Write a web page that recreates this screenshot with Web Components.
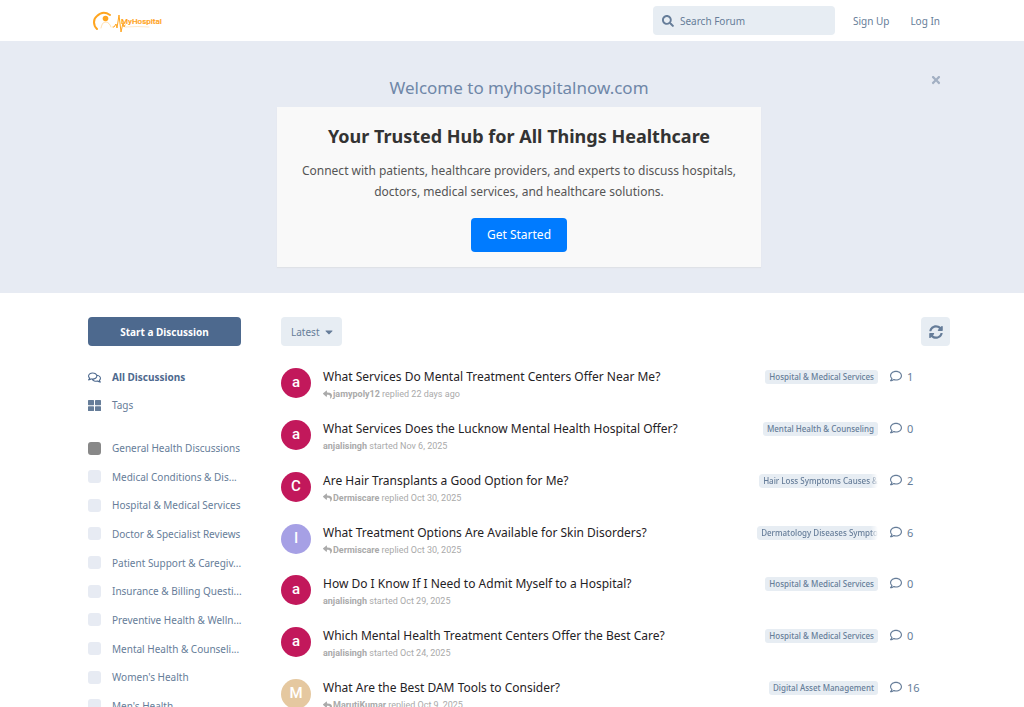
<!DOCTYPE html>
<html lang="en">
<head>
<meta charset="utf-8">
<meta name="viewport" content="width=device-width, initial-scale=1">
<title>MyHospital Forum</title>
<style>
:root { --primary: #4d698e; --muted: #667d99; --control: #e7edf3; --hero: #e7ebf3; --gutter-l: 88px; --gutter-r: 74px; }
body { margin: 0; background: #fff; color: var(--muted); font-family: "Noto Sans", "Open Sans", sans-serif; font-size: 10px; line-height: 16px; }
</style>
</head>
<body>
<forum-app></forum-app>
<script>
const icons = {
  search: ['0 0 512 512', 'M505 442.700 405.300 343c-4.500-4.500-10.600-7-17-7H372c27.600-35.300 44-79.700 44-128C416 93.100 322.900 0 208 0S0 93.100 0 208s93.100 208 208 208c48.300 0 92.700-16.400 128-44v16.300c0 6.400 2.500 12.500 7 17l99.700 99.700c9.400 9.400 24.600 9.400 33.900 0l28.300-28.300c9.400-9.400 9.400-24.600.1-34zM208 336c-70.700 0-128-57.200-128-128 0-70.700 57.200-128 128-128 70.700 0 128 57.200 128 128 0 70.700-57.200 128-128 128z'],
  close: ['0 0 352 512', 'M242.720 256l100.070-100.070c12.280-12.280 12.280-32.190 0-44.480l-22.240-22.240c-12.280-12.280-32.190-12.280-44.480 0L176 189.280 75.930 89.210c-12.280-12.280-32.190-12.280-44.480 0L9.210 111.450c-12.280 12.280-12.280 32.190 0 44.480L109.280 256 9.210 356.070c-12.280 12.280-12.280 32.190 0 44.480l22.240 22.240c12.280 12.280 32.200 12.280 44.480 0L176 322.720l100.070 100.070c12.280 12.280 32.200 12.280 44.480 0l22.240-22.240c12.280-12.280 12.280-32.190 0-44.480L242.720 256z'],
  caret: ['0 0 320 512', 'M31.300 192h257.300c17.800 0 26.700 21.500 14.100 34.100L174.100 354.800c-7.800 7.800-20.500 7.800-28.300 0L17.200 226.100C4.600 213.500 13.500 192 31.300 192z'],
  sync: ['0 0 512 512', 'M370.720 133.280C339.458 104.008 298.888 87.962 255.848 88c-77.458.068-144.328 53.178-162.791 126.850-1.344 5.363-6.122 9.150-11.651 9.150H24.103c-7.498 0-13.194-6.807-11.807-14.176C33.933 94.924 134.813 8 256 8c66.448 0 126.791 26.136 171.315 68.685L463.030 40.970C478.149 25.851 504 36.559 504 57.941V192c0 13.255-10.745 24-24 24H345.941c-21.382 0-32.090-25.851-16.971-40.971l41.750-41.749zM32 296h134.059c21.382 0 32.090 25.851 16.971 40.971l-41.750 41.750c31.262 29.273 71.835 45.319 114.876 45.280 77.418-.07 144.315-53.144 162.787-126.849 1.344-5.363 6.122-9.150 11.651-9.150h57.304c7.498 0 13.194 6.807 11.807 14.176C478.067 417.076 377.187 504 256 504c-66.448 0-126.791-26.136-171.315-68.685L48.970 471.030C33.851 486.149 8 475.441 8 454.059V320c0-13.255 10.745-24 24-24z'],
  reply: ['0 0 512 512', 'M8.309 189.836L184.313 37.851C199.719 24.546 224 35.347 224 56.015v80.053c160.629 1.839 288 34.032 288 186.258 0 61.441-39.581 122.309-83.333 154.132-13.653 9.931-33.111-2.533-28.077-18.631 45.344-145.012-21.507-183.510-176.590-185.742V360c0 20.700-24.300 31.453-39.687 18.164l-176.004-152c-11.071-9.562-11.086-26.753 0-36.328z'],
  comment: ['0 0 512 512', 'M256 32C114.600 32 0 125.100 0 240c0 47.600 19.900 91.200 52.900 126.300C38 405.700 7 439.100 6.500 439.500c-6.600 7-8.400 17.200-4.600 26S14.400 480 24 480c61.500 0 110-25.700 139.100-46.300C192 442.800 223.200 448 256 448c141.400 0 256-93.100 256-208S397.400 32 256 32zm0 368c-26.700 0-53.100-4.100-78.400-12.100l-22.700-7.200-19.500 13.800c-14.300 10.100-33.900 21.400-57.500 29 7.300-12.100 14.400-25.700 19.900-40.200l10.600-28.100-20.600-21.800C69.700 314.100 48 282.200 48 240c0-88.200 93.300-160 208-160s208 71.800 208 160-93.300 160-208 160z'],
  comments: ['0 0 576 512', 'M532 386.200c27.500-27.100 44-61.100 44-98.200 0-80-76.500-146.100-176.200-157.900C368.300 72.500 294.300 32 208 32 93.100 32 0 103.600 0 192c0 37 16.500 71 44 98.200-15.300 30.700-37.300 54.500-37.700 54.900-6.300 6.700-8.100 16.500-4.400 25 3.600 8.500 12 14 21.200 14 53.500 0 96.700-20.200 125.200-38.800 9.200 2.100 18.700 3.700 28.400 4.900C208.100 407.600 281.800 448 368 448c20.800 0 40.800-2.400 59.800-6.800C456.300 459.700 499.400 480 553 480c9.200 0 17.500-5.500 21.200-14 3.600-8.500 1.900-18.300-4.400-25-.4-.3-22.500-24.100-37.800-54.800zm-392.800-92.300L122.100 305c-14.100 9.100-28.500 16.300-43.100 21.400 2.700-4.700 5.400-9.700 8-14.800l15.500-31.100L77.700 256C64.200 242.600 48 220.700 48 192c0-60.700 73.300-112 160-112s160 51.300 160 112-73.300 112-160 112c-16.500 0-33-1.900-49-5.600l-19.800-4.500zM498.300 352l-24.700 24.400 15.500 31.100c2.600 5.100 5.300 10.100 8 14.800-14.600-5.100-29-12.300-43.100-21.400l-17.100-11.100-19.900 4.600c-16 3.700-32.500 5.600-49 5.600-54 0-102.200-20.100-131.300-49.700C338 339.500 416 272.900 416 192c0-3.400-.4-6.700-.7-10C479.700 196.500 528 238.800 528 288c0 28.700-16.200 50.600-29.700 64z'],
  grid: ['0 0 512 512', 'M24 40h188a24 24 0 0 1 24 24v156a24 24 0 0 1-24 24H24a24 24 0 0 1-24-24V64a24 24 0 0 1 24-24zM300 40h188a24 24 0 0 1 24 24v156a24 24 0 0 1-24 24H300a24 24 0 0 1-24-24V64a24 24 0 0 1 24-24zM24 284h188a24 24 0 0 1 24 24v140a24 24 0 0 1-24 24H24a24 24 0 0 1-24-24V308a24 24 0 0 1 24-24zM300 284h188a24 24 0 0 1 24 24v140a24 24 0 0 1-24 24H300a24 24 0 0 1-24-24V308a24 24 0 0 1 24-24z']
};

class Base extends HTMLElement {
  connectedCallback() {
    if (this.shadowRoot) return;
    this.attachShadow({ mode: 'open' }).innerHTML = `<style>*{box-sizing:border-box}a{color:inherit;text-decoration:none}button{font:inherit;border:0;margin:0;cursor:pointer}</style>` + this.render();
  }
}
const define = (name, render) => customElements.define(name, class extends Base { render() { return render(this); } });

define('fa-icon', el => {
  const [box, d] = icons[el.getAttribute('name')];
  return `<style>:host{display:inline-flex;flex:none;width:12px;height:12px}svg{width:100%;height:100%;fill:currentColor}</style><svg viewBox="${box}" aria-hidden="true"><path d="${d}"/></svg>`;
});

define('site-logo', () => `
<style>:host{display:block}a{display:block}svg{display:block;width:70px;height:22px}
text{font:500 8px Roboto,sans-serif;fill:#ffa51f;stroke:#ffa51f;stroke-width:.2px}</style>
<a href="#" aria-label="MyHospital"><svg viewBox="0 0 70 22">
<g fill="none" stroke="#ffa51f" stroke-linecap="round" stroke-linejoin="round">
<path d="M4 18C0 14 0 8 4 5q6-6 13-1" stroke-width="2"/>
<path d="M8 17c1-4 2-6 5-6 2 0 4 2 5 5" stroke-width="1" opacity=".35"/>
<path d="M20 16h1l2-3 1 4 2-13 2 17 2-9 1 4 1-2" stroke-width="1"/>
<path d="M32 16q13-1 24 0" stroke-width="1" opacity=".25"/></g>
<circle cx="12.500" cy="7.500" r="2.800" fill="#ffa51f"/>
<text x="28" y="13">MyHospital</text></svg></a>`);

define('site-header', () => `
<style>:host{display:block;background:#fff;border-bottom:1px solid var(--hero)}
header{display:flex;align-items:center;height:41px;padding:0 var(--gutter-r) 0 var(--gutter-l)}
site-logo{margin:2px auto 0 5px}
form{display:flex;align-items:center;gap:6px;width:182px;height:29px;padding:0 9px;border-radius:4px;background:var(--control)}
input{flex:1;min-width:0;padding:0;border:0;outline:0;background:none;font:inherit;color:inherit}
input::placeholder{color:inherit;opacity:1}
nav{display:flex;gap:21px;margin:0 10px 0 18px}</style>
<header><site-logo></site-logo>
<form role="search"><fa-icon name="search"></fa-icon><input type="search" aria-label="Search Forum" placeholder="Search Forum"></form>
<nav><a href="#">Sign Up</a><a href="#">Log In</a></nav></header>`);

define('welcome-hero', () => `
<style>:host{display:block;background:var(--hero)}
section{position:relative;padding:34px var(--gutter-r) 26px var(--gutter-l);text-align:center}
.close{position:absolute;top:30px;right:80px;display:flex;padding:2px;background:none;color:#a3b0c3}
h2{margin:0 0 7px;font-size:17px;line-height:24px;font-weight:400;color:#6f87a8}
.card{max-width:484px;margin:0 auto;padding:17px 16px 15px;background:#f9f9f9;color:#555;box-shadow:0 1px 1px #dfe2e7}
h1{margin:0 0 12px;font-size:18px;line-height:24px;font-weight:700;color:#333}
p{margin:0 0 16px;font-size:12px;line-height:21px}
.start{display:inline-block;padding:0 16px;border-radius:4px;background:#007bff;color:#fff;font-size:12px;line-height:34px;vertical-align:top}</style>
<section><button class="close" aria-label="Dismiss"><fa-icon name="close"></fa-icon></button>
<h2>Welcome to myhospitalnow.com</h2>
<div class="card"><h1>Your Trusted Hub for All Things Healthcare</h1>
<p>Connect with patients, healthcare providers, and experts to discuss hospitals, doctors, medical services, and healthcare solutions.</p>
<a class="start" href="#">Get Started</a></div></section>`);

define('nav-item', el => {
  const i = el.getAttribute('icon');
  return `<style>:host{display:block}a{display:flex;align-items:center;gap:11px;white-space:nowrap}
:host([active]){color:var(--primary);font-weight:700}
.box{flex:none;width:13px;height:13px;border-radius:3px;background:${el.getAttribute('color') || 'var(--hero)'}}
fa-icon{width:13px;height:13px}</style><a href="#">${i ? `<fa-icon name="${i}"></fa-icon>` : '<span class="box"></span>'}<slot></slot></a>`;
});

const tags = ['General Health Discussions', 'Medical Conditions &amp; Dis...', 'Hospital &amp; Medical Services', 'Doctor &amp; Specialist Reviews', 'Patient Support &amp; Caregiv...', 'Insurance &amp; Billing Questi...', 'Preventive Health &amp; Welln...', 'Mental Health &amp; Counseli...', 'Women\'s Health', 'Men\'s Health'];
define('forum-sidebar', () => `
<style>:host{display:block}
button{display:block;width:100%;height:29px;border-radius:4px;background:var(--primary);color:#fff;font-weight:700}
nav{margin-top:23px;display:grid;gap:12px}
.tags{margin-top:27px;min-height:274px;align-content:space-between}</style>
<button>Start a Discussion</button>
<nav><nav-item icon="comments" active>All Discussions</nav-item><nav-item icon="grid">Tags</nav-item></nav>
<nav class="tags" aria-label="Tags">${tags.map((t, i) => `<nav-item${i ? '' : ' color="#888"'}>${t}</nav-item>`).join('')}</nav>`);

define('discussion-row', el => {
  const a = n => el.getAttribute(n);
  return `<style>:host{display:grid;grid-template-columns:30px minmax(0,1fr) auto 60px;column-gap:12px;min-height:50px;align-items:start}
.avatar{width:30px;height:30px;border-radius:50%;background:${a('color')};color:#fff;font-size:15px;font-weight:500;line-height:29px;text-align:center;font-family:Roboto,sans-serif}
h3{margin:0;font-size:12px;line-height:18px;font-weight:400;color:#1f2225;white-space:nowrap}
p{display:flex;align-items:center;margin:2px 0 0;font-family:Roboto,sans-serif;font-size:9px;line-height:12px;color:#aaa;white-space:pre}
p fa-icon{width:9px;height:9px;margin-right:1px}
.tag{max-width:121px;height:14px;margin-top:2px;padding:0 4px;border-radius:3px;background:var(--control);font-size:8px;line-height:14px;font-weight:500;white-space:nowrap;overflow:hidden}
.tag.long{padding-right:0;-webkit-mask-image:linear-gradient(90deg,#000 94%,transparent);mask-image:linear-gradient(90deg,#000 94%,transparent)}
.count{display:flex;align-items:flex-start;gap:5px;height:18px;font-size:11px;line-height:18px}
.count fa-icon{margin-top:2px}</style>
<span class="avatar">${a('letter')}</span>
<div><h3><a href="#"><slot></slot></a></h3><p>${a('verb') === 'replied' ? '<fa-icon name="reply"></fa-icon>' : ''}<b>${a('user')}</b> ${a('verb')} ${a('time')}</p></div>
<a href="#" class="tag${el.hasAttribute('long') ? ' long' : ''}">${a('tag').replace('&', '&amp;')}</a>
<span class="count"><fa-icon name="comment"></fa-icon>${a('count')}</span>`;
});

const rows = [
  ['a', '#c2185b', 'What Services Do Mental Treatment Centers Offer Near Me?', 'jamypoly12', 'replied', '22 days ago', 'Hospital & Medical Services', 1],
  ['a', '#c2185b', 'What Services Does the Lucknow Mental Health Hospital Offer?', 'anjalisingh', 'started', 'Nov 6, 2025', 'Mental Health & Counseling', 0],
  ['C', '#c2185b', 'Are Hair Transplants a Good Option for Me?', 'Dermiscare', 'replied', 'Oct 30, 2025', 'Hair Loss Symptoms Causes &', 2, 'long'],
  ['I', '#a6a0e5', 'What Treatment Options Are Available for Skin Disorders?', 'Dermiscare', 'replied', 'Oct 30, 2025', 'Dermatology Diseases Sympto', 6, 'long'],
  ['a', '#c2185b', 'How Do I Know If I Need to Admit Myself to a Hospital?', 'anjalisingh', 'started', 'Oct 29, 2025', 'Hospital & Medical Services', 0],
  ['a', '#c2185b', 'Which Mental Health Treatment Centers Offer the Best Care?', 'anjalisingh', 'started', 'Oct 24, 2025', 'Hospital & Medical Services', 0],
  ['M', '#e5c8a0', 'What Are the Best DAM Tools to Consider?', 'MarutiKumar', 'replied', 'Oct 9, 2025', 'Digital Asset Management', 16]
];
define('discussion-list', () => `
<style>:host{display:block}
.bar{display:flex;justify-content:space-between;margin-bottom:22px}
.rows{display:grid;grid-auto-rows:1fr;min-height:363px}
button{display:flex;align-items:center;justify-content:center;gap:3px;height:29px;padding:0 7px 0 10px;border-radius:4px;background:var(--control);color:var(--muted)}
.refresh{width:29px;padding:0}
.refresh fa-icon{width:14px;height:14px}</style>
<div class="bar"><button>Latest<fa-icon name="caret"></fa-icon></button><button class="refresh" aria-label="Refresh"><fa-icon name="sync"></fa-icon></button></div>
<div class="rows">${rows.map(r => `<discussion-row letter="${r[0]}" color="${r[1]}" user="${r[3]}" verb="${r[4]}" time="${r[5]}" tag="${r[6].replace('&', '&amp;')}" count="${r[7]}" ${r[8] || ''}>${r[2]}</discussion-row>`).join('')}</div>`);

define('forum-app', () => `
<style>:host{display:block}
main{display:grid;grid-template-columns:153px minmax(0,1fr);column-gap:40px;padding:24px var(--gutter-r) 0 var(--gutter-l)}</style>
<site-header></site-header><welcome-hero></welcome-hero>
<main><forum-sidebar></forum-sidebar><discussion-list></discussion-list></main>`);
</script>
</body>
</html>
